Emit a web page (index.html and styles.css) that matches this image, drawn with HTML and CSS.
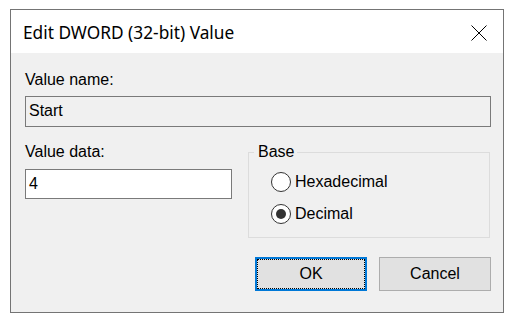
FILE: index.html
```html
<!DOCTYPE html>
<html>
<head>
    <link rel="stylesheet" href="styles.css">
</head>
<body>
    <div class="dialog">
        <div class="title-bar">
            <span class="title">Edit DWORD (32-bit) Value</span>
            <svg class="close" width="16" height="16" viewBox="0 0 16 16">
                <path d="M0.5 0.5 L15.5 15.5 M15.5 0.5 L0.5 15.5" stroke="#000" stroke-width="1" fill="none"/>
            </svg>
        </div>

        <div class="content">
            <label class="label">Value name:</label>
            <div class="textbox readonly">Start</div>

            <div class="row">
                <div class="data-col">
                    <label class="label">Value data:</label>
                    <div class="textbox data">4</div>
                </div>

                <fieldset class="group">
                    <legend>Base</legend>
                    <div class="radio-list">
                        <div class="radio"><span class="circle"></span>Hexadecimal</div>
                        <div class="radio"><span class="circle checked"></span>Decimal</div>
                    </div>
                </fieldset>
            </div>

            <div class="buttons">
                <button class="btn default">OK</button>
                <button class="btn">Cancel</button>
            </div>
        </div>
    </div>
</body>
</html>
```

FILE: styles.css
```css
/* page */
body {
    margin: 0;
    background-color: #fff;
    font-family: "Liberation Sans", Arial, sans-serif;
    font-size: 16px;
    color: #000;
}

/* dialog window */
.dialog {
    margin: 9px 0 0 10px;
    width: 494px;
    height: 304px;
    box-sizing: border-box;
    border: 1px solid #747474;
    display: flex;
    flex-direction: column;
}

.title-bar {
    height: 43px;
    background-color: #fff;
    display: flex;
    align-items: center;
    padding: 0 16px 0 12px;
}

.title {
    flex: 1;
    font-family: "Noto Sans", "Open Sans", sans-serif;
    font-size: 17.3px;
    margin-top: 2px;
}

.close {
    margin-top: 2px;
}

.content {
    flex: 1;
    background-color: #f0f0f0;
    padding: 18px 12px 0 14px;
}

.label {
    display: block;
    line-height: 18px;
}

.textbox {
    border: 1px solid #7a7a7a;
    line-height: 19px;
    padding: 4px 3px 6px;
    background-color: #fff;
}

.textbox.readonly {
    background-color: #f0f0f0;
    margin-top: 7px;
}

.row {
    display: flex;
    gap: 16px;
    margin-top: 16px;
}

.data-col {
    width: 207px;
}

.textbox.data {
    margin-top: 8px;
    padding: 4px 3px 5px;
}

/* Base group */
.group {
    flex: 1;
    margin: 0 1px 0 0;
    padding: 0;
    border: 1px solid #dcdcdc;
}

.group legend {
    margin-left: 5px;
    padding: 0 3px 0 4px;
    line-height: 18px;
}

.radio-list {
    display: flex;
    flex-direction: column;
    gap: 12px;
    padding: 11px 0 13px 22px;
}

.radio {
    display: flex;
    align-items: center;
    gap: 4px;
    line-height: 20px;
}

.circle {
    width: 18px;
    height: 18px;
    border: 1px solid #333;
    border-radius: 50%;
    background-color: #fff;
    display: flex;
    align-items: center;
    justify-content: center;
}

.circle.checked::after {
    content: "";
    width: 10px;
    height: 10px;
    border-radius: 50%;
    background-color: #333;
}

/* buttons */
.buttons {
    display: flex;
    justify-content: flex-end;
    gap: 12px;
    margin-top: 19px;
}

.btn {
    width: 112px;
    height: 34px;
    box-sizing: border-box;
    background-color: #e1e1e1;
    border: 1px solid #adadad;
    font-family: "Liberation Sans", Arial, sans-serif;
    font-size: 16px;
    color: #000;
    padding: 0;
}

.btn.default {
    border: 2px solid #0078d7;
    outline: 1px dotted #000;
    outline-offset: -3px;
}
```
